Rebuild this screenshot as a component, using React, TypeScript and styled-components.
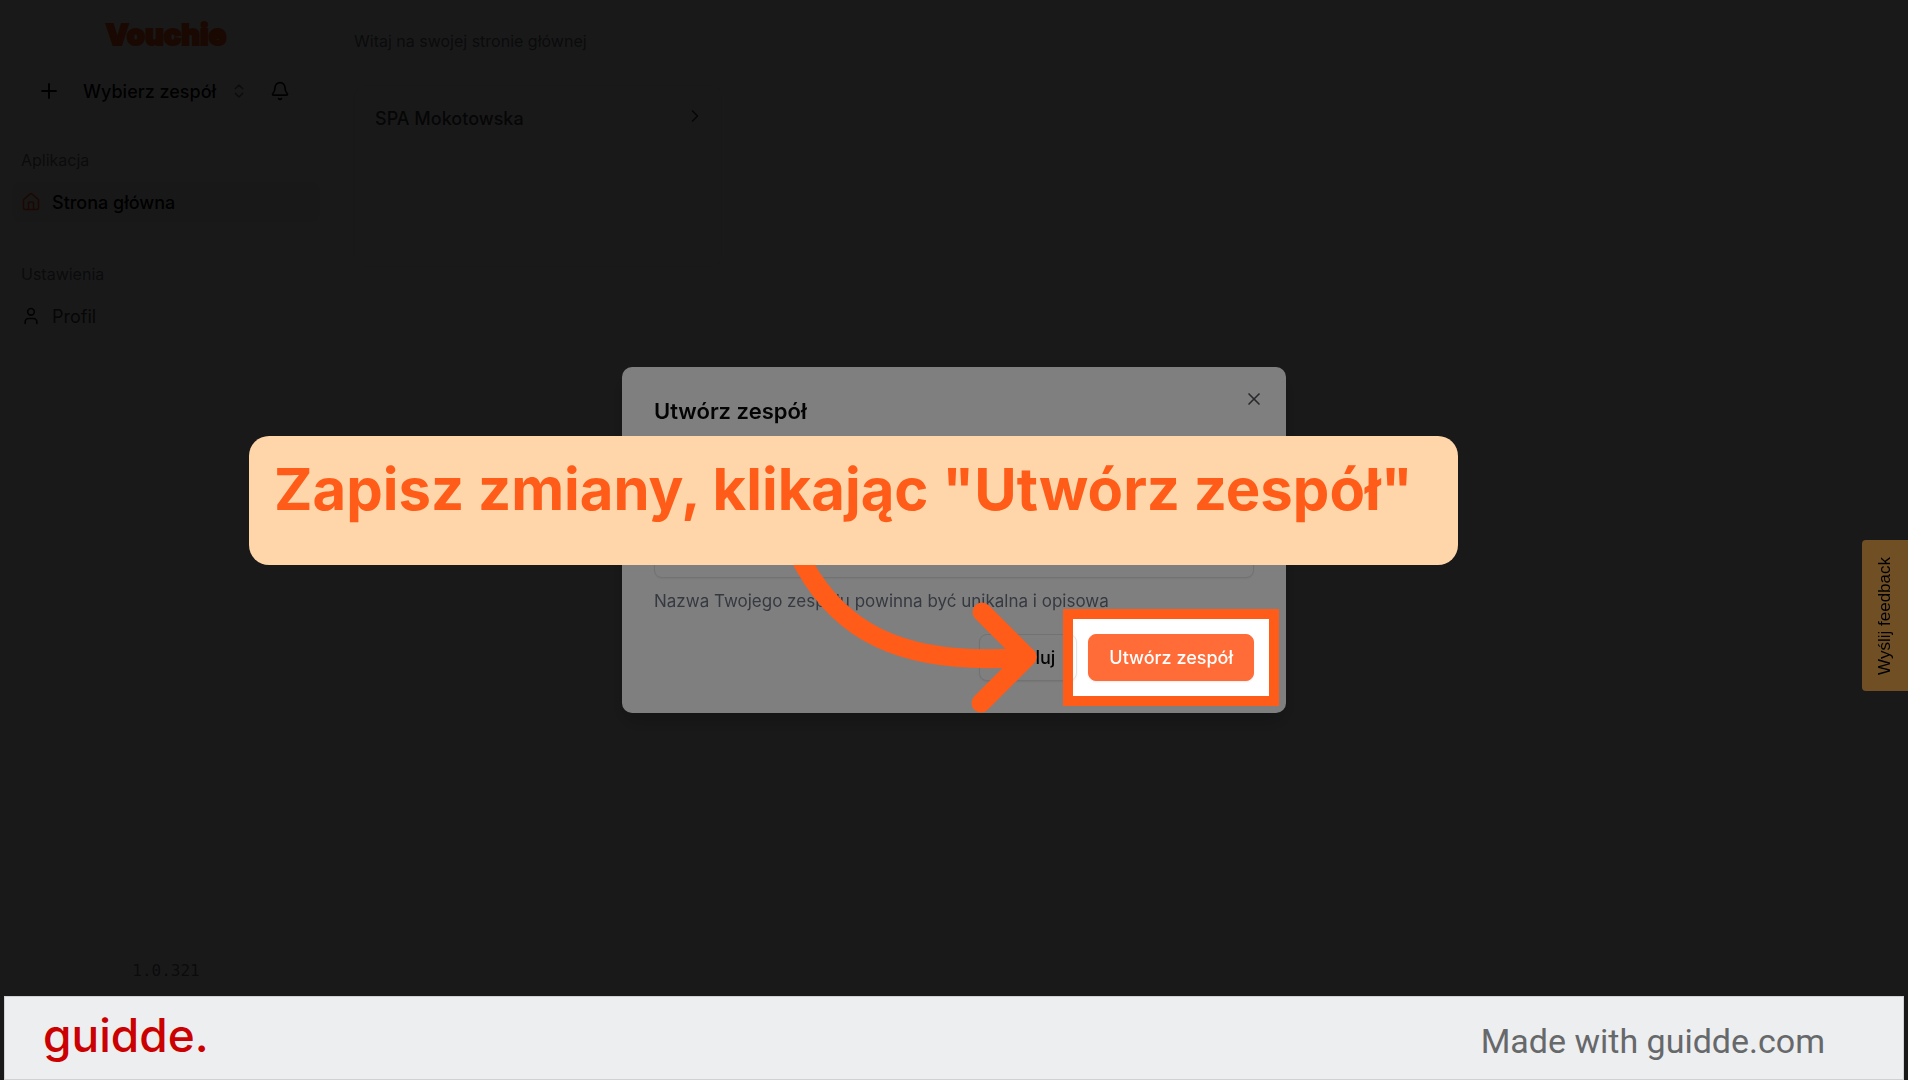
import React from "react";
import styled, { createGlobalStyle } from "styled-components";
import { Bell, ChevronRight, ChevronsUpDown, House, Plus, User, X } from "lucide-react";

const sans = `Inter, "Noto Sans", sans-serif`;
const brand = "#ff5c1a";
const muted = "#6b7280";

const GlobalStyle = createGlobalStyle`
  *, *::before, *::after { box-sizing: border-box; }
  body { margin: 0; background: #fff; color: #09090b; font-family: ${sans}; overflow: hidden; }
  h1, h2, p { margin: 0; }
  button, input { font: inherit; color: inherit; }
`;

const Page = styled.div`
  display: flex;
  min-height: 100vh;
  padding-bottom: 84px;
`;

const Sidebar = styled.aside`
  display: flex;
  flex-direction: column;
  width: 332px;
  padding: 16px 12px;
`;

const Logo = styled.a`
  align-self: center;
  color: ${brand};
  font-size: 29px;
  font-weight: 900;
  line-height: 38px;
  text-decoration: none;
  -webkit-text-stroke: 2px ${brand};
  stroke-linejoin: round;
`;

const TeamBar = styled.div`
  display: flex;
  align-items: center;
  height: 48px;
  margin-top: 13px;
  padding: 0 25px;
`;

const IconButton = styled.button`
  display: flex;
  padding: 0;
  border: 0;
  background: none;
`;

const TeamSelect = styled.button`
  display: flex;
  align-items: center;
  gap: 14px;
  margin: 0 22px;
  padding: 0;
  border: 0;
  background: none;
  font-size: 18px;
  font-weight: 500;
  white-space: nowrap;

  svg { color: ${muted}; }
`;

const NavGroup = styled.nav`
  display: flex;
  flex-direction: column;
  margin-bottom: 42px;
`;

const NavHeading = styled.h2`
  padding: 0 9px;
  color: ${muted};
  font-size: 16px;
  font-weight: 400;
  line-height: 20px;
`;

const NavLink = styled.a<{ $active?: boolean }>`
  display: flex;
  align-items: center;
  gap: 11px;
  height: 40px;
  margin-top: 12px;
  padding: 0 9px;
  border-radius: 8px;
  background: ${(p) => (p.$active ? "#f4f4f5" : "transparent")};
  color: ${(p) => (p.$active ? "#000" : "#3f3f46")};
  font-size: 18px;
  font-weight: ${(p) => (p.$active ? 500 : 400)};
  text-decoration: none;

  svg { color: ${(p) => (p.$active ? brand : "#18181b")}; }
`;

const NavList = styled.div`
  margin-top: 35px;
`;

const Version = styled.p`
  margin-top: auto;
  color: ${muted};
  font-family: "DejaVu Sans Mono", monospace;
  font-size: 16px;
  line-height: 18px;
  text-align: center;
`;

const Main = styled.main`
  flex: 1;
  padding: 31px 22px;
`;

const Welcome = styled.p`
  color: ${muted};
  font-size: 16px;
  line-height: 20px;
`;

const TeamCard = styled.a`
  display: flex;
  justify-content: space-between;
  width: 368px;
  height: 182px;
  margin-top: 34px;
  padding: 20px 16px 20px 20px;
  border: 1px solid #f0f0f2;
  border-radius: 12px;
  color: #3f3f46;
  font-size: 18px;
  font-weight: 500;
  line-height: 26px;
  text-decoration: none;
`;

const Feedback = styled.button`
  position: fixed;
  top: 50%;
  right: 0;
  z-index: 2;
  display: flex;
  align-items: center;
  justify-content: center;
  width: 46px;
  height: 151px;
  padding: 0;
  border: 0;
  border-radius: 4px 0 0 4px;
  background: #e09e4a;
  color: #000;
  font-family: "Liberation Sans", Arial, sans-serif;
  font-size: 17px;

  span { writing-mode: vertical-rl; transform: rotate(180deg); }
`;

const Layer = styled.div<{ $z: number; $shade?: boolean }>`
  position: fixed;
  inset: 0;
  z-index: ${(p) => p.$z};
  display: grid;
  place-items: center;
  overflow: hidden;
  background: ${(p) => (p.$shade ? "rgba(0, 0, 0, 0.8)" : "none")};
`;

const Dialog = styled.section`
  width: 664px;
  padding: 32px;
  border-radius: 10px;
  background: #fff;
  box-shadow: 0 10px 20px rgba(0, 0, 0, 0.2);
`;

const DialogHead = styled.header`
  display: flex;
  justify-content: space-between;
`;

const DialogTitle = styled.h1`
  font-size: 22px;
  font-weight: 600;
  line-height: 24px;
`;

const CloseButton = styled(IconButton)`
  align-self: flex-start;
  margin: -10px -10px 0 0;
  color: #52525b;
`;

const NameField = styled.input`
  display: block;
  width: 100%;
  height: 48px;
  margin-top: 107px;
  padding: 0 16px;
  border: 1px solid #e4e4e7;
  border-radius: 8px;
  box-shadow: 0 1px 2px rgba(0, 0, 0, 0.06);
  font-size: 18px;
`;

const Hint = styled.p`
  margin-top: 13px;
  color: ${muted};
  font-size: 17px;
  line-height: 20px;
`;

const Actions = styled.div`
  display: flex;
  justify-content: flex-end;
  gap: 11px;
  margin-top: 23px;
`;

const Button = styled.button<{ $primary?: boolean }>`
  height: 47px;
  padding: 0 ${(p) => (p.$primary ? "20px" : "21px")};
  border: 1px solid ${(p) => (p.$primary ? "#ff6c37" : "#e4e4e7")};
  border-radius: 8px;
  background: ${(p) => (p.$primary ? "#ff6c37" : "#fff")};
  box-shadow: 0 1px 2px rgba(0, 0, 0, 0.08);
  color: ${(p) => (p.$primary ? "#fff" : "#09090b")};
  font-size: 18px;
  font-weight: 500;
`;

const GuideCanvas = styled.div`
  position: relative;
  width: 664px;
  height: 346px;
`;

const Spotlight = styled.div`
  position: absolute;
  top: 242px;
  left: 441px;
  width: 216px;
  height: 97px;
  border: 10px solid ${brand};
  box-shadow: 0 0 0 3000px rgba(0, 0, 0, 0.5);
`;

const Arrow = styled.svg`
  position: absolute;
  top: 143px;
  left: 148px;
`;

const Callout = styled.p`
  position: absolute;
  top: 69px;
  left: -373px;
  width: 1209px;
  height: 129px;
  padding: 18px 25px;
  border-radius: 20px;
  background: #ffd6a9;
  color: ${brand};
  font-size: 58px;
  font-weight: 700;
  line-height: 70px;
  white-space: nowrap;
`;

const Footer = styled.footer`
  position: fixed;
  right: 4px;
  bottom: 0;
  left: 4px;
  z-index: 4;
  display: flex;
  align-items: center;
  justify-content: space-between;
  height: 84px;
  padding: 0 78px 0 38px;
  border: 1px solid #d0d1d3;
  background: #edeef0;
`;

const GuiddeLogo = styled.strong`
  padding-bottom: 6px;
  color: #cb0000;
  font-size: 46px;
  font-weight: 500;
  line-height: 60px;
`;

const Credit = styled.p`
  padding-top: 6px;
  color: #66686a;
  font-family: Roboto, sans-serif;
  font-size: 34px;
  line-height: 40px;
`;

export default function App() {
  return (
    <>
      <GlobalStyle />
      <Page>
        <Sidebar>
          <Logo href="#">Vouchie</Logo>
          <TeamBar>
            <IconButton aria-label="Dodaj">
              <Plus size={24} strokeWidth={2} />
            </IconButton>
            <TeamSelect>
              Wybierz zespół
              <ChevronsUpDown size={18} strokeWidth={2} />
            </TeamSelect>
            <IconButton aria-label="Powiadomienia">
              <Bell size={20} strokeWidth={2} />
            </IconButton>
          </TeamBar>
          <NavList>
            <NavGroup>
              <NavHeading>Aplikacja</NavHeading>
              <NavLink href="#" $active>
                <House size={20} strokeWidth={2} />
                Strona główna
              </NavLink>
            </NavGroup>
            <NavGroup>
              <NavHeading>Ustawienia</NavHeading>
              <NavLink href="#">
                <User size={20} strokeWidth={2} />
                Profil
              </NavLink>
            </NavGroup>
          </NavList>
          <Version>1.0.321</Version>
        </Sidebar>
        <Main>
          <Welcome>Witaj na swojej stronie głównej</Welcome>
          <TeamCard href="#">
            SPA Mokotowska
            <ChevronRight size={20} />
          </TeamCard>
        </Main>
      </Page>

      <Layer $z={1} $shade>
        <Dialog role="dialog" aria-labelledby="dialog-title">
          <DialogHead>
            <DialogTitle id="dialog-title">Utwórz zespół</DialogTitle>
            <CloseButton aria-label="Zamknij">
              <X size={20} strokeWidth={2} />
            </CloseButton>
          </DialogHead>
          <NameField aria-label="Nazwa zespołu" aria-describedby="name-hint" />
          <Hint id="name-hint">Nazwa Twojego zespołu powinna być unikalna i opisowa</Hint>
          <Actions>
            <Button>Anuluj</Button>
            <Button $primary>Utwórz zespół</Button>
          </Actions>
        </Dialog>
      </Layer>
      <Feedback>
        <span>Wyślij feedback</span>
      </Feedback>

      <Layer $z={3}>
        <GuideCanvas>
          <Spotlight />
          <Arrow
            width="280"
            height="210"
            viewBox="770 510 280 210"
            fill="none"
            stroke={brand}
            strokeWidth="19"
            strokeLinecap="round"
            strokeLinejoin="round"
          >
            <path d="M784 530L804 565C838 626 895 668 1027 657" />
            <path d="M982 612L1027 657L981 703" />
          </Arrow>
          <Callout>Zapisz zmiany, klikając "Utwórz zespół"</Callout>
        </GuideCanvas>
      </Layer>

      <Footer>
        <GuiddeLogo>guidde.</GuiddeLogo>
        <Credit>Made with guidde.com</Credit>
      </Footer>
    </>
  );
}
